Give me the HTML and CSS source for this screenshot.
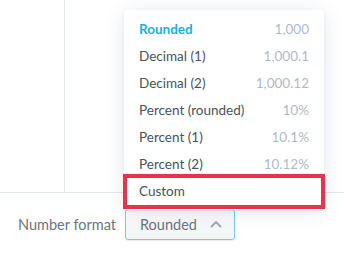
FILE: index.html
```html
<!DOCTYPE html>
<html>
<head>
<meta charset="utf-8">
<link rel="stylesheet" href="styles.css">
</head>
<body>
<div class="page">
  <div class="canvas">
    <div class="col"></div>
  </div>
  <div class="footer">
    <span class="label">Number format</span>
    <button class="select">
      <span>Rounded</span>
      <svg class="caret" width="12" height="8" viewBox="0 0 12 8"><path d="M1.5 6.5 L6 2 L10.5 6.5" fill="none" stroke="#a3acb6" stroke-width="2" stroke-linecap="round" stroke-linejoin="round"/></svg>
    </button>
  </div>
  <div class="menu">
    <div class="item active"><span>Rounded</span><span class="val">1,000</span></div>
    <div class="item"><span>Decimal (1)</span><span class="val">1,000.1</span></div>
    <div class="item"><span>Decimal (2)</span><span class="val">1,000.12</span></div>
    <div class="item"><span>Percent (rounded)</span><span class="val">10%</span></div>
    <div class="item"><span>Percent (1)</span><span class="val">10.1%</span></div>
    <div class="item"><span>Percent (2)</span><span class="val">10.12%</span></div>
    <div class="item"><span>Custom</span></div>
  </div>
  <div class="highlight"></div>
</div>
</body>
</html>
```

FILE: styles.css
```css
html, body {
  margin: 0;
  padding: 0;
  background: #fff;
}
body {
  font-family: Lato, "Open Sans", sans-serif;
  width: 344px;
  height: 254px;
  overflow: hidden;
}
.page {
  position: relative;
  width: 344px;
  height: 254px;
}
.canvas {
  height: 193px;
  border-bottom: 1px solid #e4e9f0;
  box-sizing: border-box;
  display: flex;
}
.col {
  width: 65px;
  border-right: 1px solid #e4e9f0;
  box-sizing: border-box;
}
.footer {
  display: flex;
  align-items: center;
  padding: 16px 0 0 18px;
  gap: 9px;
}
.label {
  font-size: 14.5px;
  color: #6d7580;
}
.select {
  width: 110px;
  height: 31px;
  box-sizing: border-box;
  border: 1px solid #6fcbea;
  border-radius: 3px;
  background: linear-gradient(#fbfbfc, #f3f5f7);
  box-shadow: 0 1px 1px rgba(20,56,93,0.1);
  display: flex;
  align-items: center;
  padding: 0 0 0 14px;
  gap: 13px;
  font-family: Lato, "Open Sans", sans-serif;
  font-size: 14.5px;
  color: #6d7580;
}
.caret {
  margin-top: -1px;
}
.menu {
  position: absolute;
  left: 124px;
  top: 10px;
  width: 200px;
  height: 200px;
  box-sizing: border-box;
  background: #fff;
  border-radius: 3px;
  box-shadow: 0 2px 20px rgba(20,56,93,0.12), 0 1px 3px rgba(20,56,93,0.06);
  padding: 5px 15px 0 15px;
}
.item {
  height: 27px;
  display: flex;
  align-items: center;
  justify-content: space-between;
  font-size: 13.5px;
  color: #4a525b;
}
.item.active {
  color: #14b2e2;
  font-weight: bold;
}
.val {
  color: #b0bac6;
  font-weight: normal;
}
.highlight {
  position: absolute;
  left: 123px;
  top: 174px;
  width: 202px;
  height: 35px;
  box-sizing: border-box;
  border: 4px solid #e5354d;
}
```
